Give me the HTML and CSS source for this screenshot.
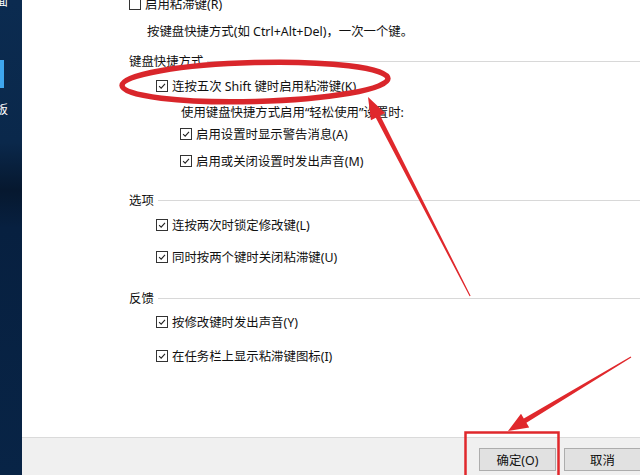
FILE: index.html
```html
<!DOCTYPE html>
<html lang="zh-CN">
<head>
<meta charset="utf-8">
<title>粘滞键设置</title>
<link rel="stylesheet" href="styles.css">
</head>
<body>
<div class="screen">
  <aside class="sidebar">
    <span class="sb-top">面</span>
    <div class="sb-tab"></div>
    <span class="sb-label">板</span>
  </aside>
  <main class="dialog">
    <div class="content">
      <div class="row r-first"><span class="cb"></span><span>启用粘滞键(R)</span></div>
      <div class="row desc">按键盘快捷方式(如 Ctrl+Alt+Del)，一次一个键。</div>

      <div class="legend l-keys">键盘快捷方式</div>
      <div class="row ind1 r-k"><span class="cb on"><svg viewBox="0 0 12 12"><polyline points="2.5,6.2 5,8.6 9.6,3.4"/></svg></span><span>连按五次 Shift 键时启用粘滞键(K)</span></div>
      <div class="row note">使用键盘快捷方式启用“轻松使用”设置时:</div>
      <div class="row ind2 r-a"><span class="cb on"><svg viewBox="0 0 12 12"><polyline points="2.5,6.2 5,8.6 9.6,3.4"/></svg></span><span>启用设置时显示警告消息(A)</span></div>
      <div class="row ind2 r-m"><span class="cb on"><svg viewBox="0 0 12 12"><polyline points="2.5,6.2 5,8.6 9.6,3.4"/></svg></span><span>启用或关闭设置时发出声音(M)</span></div>

      <div class="legend l-opts">选项</div>
      <div class="row ind1 r-l"><span class="cb on"><svg viewBox="0 0 12 12"><polyline points="2.5,6.2 5,8.6 9.6,3.4"/></svg></span><span>连按两次时锁定修改键(L)</span></div>
      <div class="row ind1 r-u"><span class="cb on"><svg viewBox="0 0 12 12"><polyline points="2.5,6.2 5,8.6 9.6,3.4"/></svg></span><span>同时按两个键时关闭粘滞键(U)</span></div>

      <div class="legend l-fb">反馈</div>
      <div class="row ind1 r-y"><span class="cb on"><svg viewBox="0 0 12 12"><polyline points="2.5,6.2 5,8.6 9.6,3.4"/></svg></span><span>按修改键时发出声音(Y)</span></div>
      <div class="row ind1 r-i"><span class="cb on"><svg viewBox="0 0 12 12"><polyline points="2.5,6.2 5,8.6 9.6,3.4"/></svg></span><span>在任务栏上显示粘滞键图标(I)</span></div>
    </div>
    <footer class="footer">
      <button class="btn">确定(O)</button>
      <button class="btn btn-last">取消</button>
    </footer>
  </main>
</div>
<svg class="annot" viewBox="0 0 640 475" width="640" height="475">
  <ellipse cx="255" cy="82" rx="133" ry="19.5" transform="rotate(-1.5 255 82)" fill="none" stroke="#d9262b" stroke-width="5.5"/>
  <polygon fill="#e0282c" points="368,97 385.1,113 380.2,115.5 470.6,295.8 469.6,296.3 375.8,117.7 370.9,120.2"/>
  <polygon fill="#e0282c" points="508,431 521,413.8 523.8,418.6 630.7,356.6 631.3,357.4 526.4,422.8 529.2,427.6"/>
  <rect x="465.5" y="432.5" width="93" height="46" fill="none" stroke="#e0282c" stroke-width="2.5"/>
</svg>
</body>
</html>
```

FILE: styles.css
```css
html, body {
  margin: 0;
  padding: 0;
}
body {
  width: 640px;
  height: 475px;
  overflow: hidden;
  position: relative;
  font-family: "Noto Sans", "Noto Sans CJK SC", sans-serif;
  font-size: 12.4px;
  color: #111;
}
.screen {
  display: flex;
  width: 640px;
  height: 475px;
}
.sidebar {
  width: 22px;
  flex: none;
  display: flex;
  flex-direction: column;
  overflow: hidden;
  background: linear-gradient(180deg, #0b2b50 0%, #0a284b 30%, #06182f 40%, #072040 48%, #082446 100%);
  color: #fff;
}
.sb-top {
  height: 7px;
  line-height: 4px;
  overflow: hidden;
  margin-left: -4px;
  font-size: 12px;
}
.sb-tab {
  margin-top: 53px;
  width: 4px;
  height: 28px;
  background: #3ea6ee;
}
.sb-label {
  margin-top: 15px;
  margin-left: -4px;
  line-height: 14px;
  font-size: 12px;
}
.dialog {
  flex: 1;
  display: flex;
  flex-direction: column;
  background: #fff;
  min-width: 0;
}
.content {
  flex: 1;
  padding-left: 107px;
  overflow: hidden;
}
.row {
  height: 20px;
  display: flex;
  align-items: center;
  gap: 4px;
  white-space: nowrap;
}
.cb {
  width: 12px;
  height: 12px;
  box-sizing: border-box;
  border: 1px solid #333;
  background: #fff;
  flex: none;
  display: flex;
}
.cb svg {
  width: 10px;
  height: 10px;
}
.cb polyline {
  fill: none;
  stroke: #222;
  stroke-width: 1.3;
}
.legend {
  height: 20px;
  display: flex;
  align-items: center;
  white-space: nowrap;
}
.legend::after {
  content: "";
  flex: 1;
  border-top: 1px solid #d8d8d8;
  margin-left: 4px;
}
.ind1 { margin-left: 27px; }
.ind2 { margin-left: 51px; }

.r-first { margin-top: -6px; }
.desc { margin-top: 7px; margin-left: 18px; }
.l-keys { margin-top: 10px; }
.r-k { margin-top: 5px; }
.note { margin-top: 6px; margin-left: 52px; }
.r-a { margin-top: 2px; }
.r-m { margin-top: 7px; }
.l-opts { margin-top: 19px; }
.r-l { margin-top: 5px; }
.r-u { margin-top: 12px; }
.l-fb { margin-top: 21px; }
.r-y { margin-top: 4px; }
.r-i { margin-top: 14px; }

.footer {
  flex: none;
  height: 37px;
  border-top: 1px solid #dadada;
  background: #f0f0f0;
  display: flex;
  justify-content: flex-end;
  align-items: flex-start;
  gap: 8px;
}
.btn {
  margin-top: 10px;
  width: 77px;
  height: 23px;
  box-sizing: border-box;
  border: 1px solid #adadad;
  background: #e1e1e1;
  font-family: "Noto Sans", "Noto Sans CJK SC", sans-serif;
  font-size: 12.4px;
  color: #111;
  padding: 0;
}
.btn-last {
  margin-right: -1px;
}
.annot {
  position: absolute;
  left: 0;
  top: 0;
  pointer-events: none;
}
```
